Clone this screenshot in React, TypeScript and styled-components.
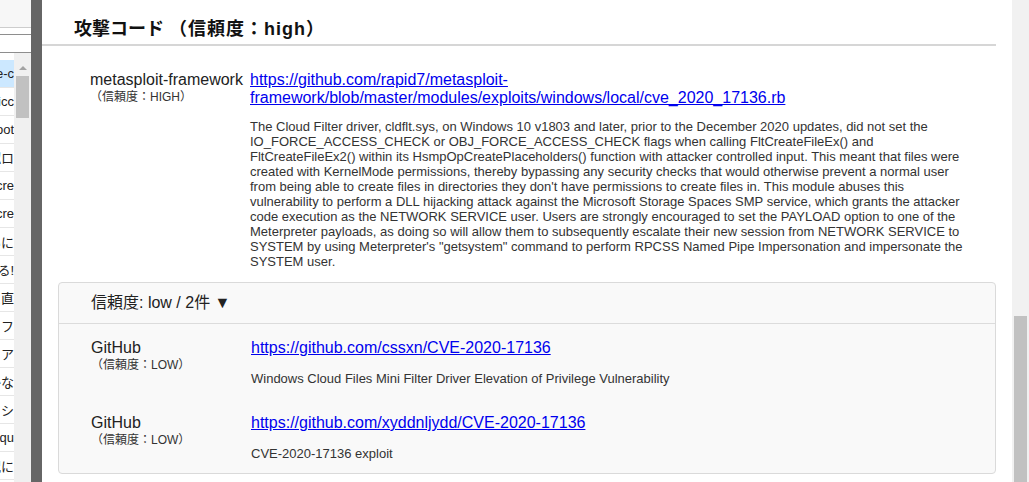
import React from "react";
import styled, { createGlobalStyle } from "styled-components";

const GlobalStyle = createGlobalStyle`
  html, body { margin: 0; padding: 0; background: #fff; overflow: hidden; }
  body {
    font-family: "Liberation Sans", Arial, "Noto Sans CJK JP", sans-serif;
    color: #222;
  }
  * { box-sizing: border-box; }
`;

const Frame = styled.div`
  display: flex;
  width: 1029px;
  height: 482px;
  overflow: hidden;
`;

/* ---------- background page strip (left) ---------- */
const BackPage = styled.div`
  width: 31px;
  flex: none;
  display: flex;
  flex-direction: column;
  background: #fff;
`;

const BackTitle = styled.div`
  height: 28px;
  flex: none;
  background: #f7f7f7;
  border-bottom: 1px solid #cdcdcd;
`;

const BackField = styled.div<{ $h: number }>`
  height: ${(p) => p.$h}px;
  flex: none;
  border-bottom: 1px solid #8e8e8e;
`;

const BackList = styled.div`
  flex: 1;
  min-height: 0;
  display: flex;
`;

const ListCol = styled.div`
  width: 14px;
  flex: none;
  overflow: hidden;
  padding-top: 7px;
`;

const ListRow = styled.div<{ $active?: boolean }>`
  height: 28px;
  display: flex;
  align-items: center;
  justify-content: flex-end;
  overflow: hidden;
  white-space: nowrap;
  border-bottom: 1px solid #e6e6e6;
  background: ${(p) => (p.$active ? "#cce8ff" : "#fff")};
  font-size: 13px;
  color: #222;
  span { flex: none; }
`;

const BackScroll = styled.div`
  width: 17px;
  flex: none;
  background: #f0f0f0;
  display: flex;
  flex-direction: column;
  align-items: center;
  padding-top: 7px;
`;

const ArrowUp = styled.div`
  height: 16px;
  width: 100%;
  display: flex;
  align-items: center;
  justify-content: center;
  &::before {
    content: "";
    border-left: 4px solid transparent;
    border-right: 4px solid transparent;
    border-bottom: 4px solid #a3a3a3;
  }
`;

const SmallThumb = styled.div`
  width: 13px;
  height: 42px;
  background: #c1c1c1;
`;

const Shade = styled.div`
  width: 11px;
  flex: none;
  background: #666;
`;

/* ---------- modal ---------- */
const Modal = styled.div`
  flex: 1;
  min-width: 0;
  background: #fff;
  padding-right: 16px;
  display: flex;
  flex-direction: column;
  overflow: hidden;
`;

const Heading = styled.h2`
  margin: 0;
  padding: 17px 0 3px 32px;
  font-size: 18px;
  line-height: 24px;
  font-weight: bold;
  color: #111;
  border-bottom: 2px solid #d6d6d6;
  white-space: nowrap;
`;

const HeadingNote = styled.span`
  margin-left: 5px;
  letter-spacing: 1px;
`;

const SourceRow = styled.div<{ $indent: number; $top: number }>`
  display: grid;
  grid-template-columns: 160px 1fr;
  padding-left: ${(p) => p.$indent}px;
  margin-top: ${(p) => p.$top}px;
`;

const Label = styled.div`
  font-size: 16px;
  line-height: 18px;
  color: #222;
  white-space: nowrap;
`;

const SubLabel = styled.div`
  font-size: 12px;
  line-height: 17px;
  color: #333;
  white-space: nowrap;
`;

const Link = styled.a`
  font-size: 16px;
  line-height: 18px;
  color: #0000ee;
  text-decoration: underline;
  white-space: nowrap;
`;

const LinkLine = styled.div`
  font-size: 16px;
  line-height: 18px;
`;

const Desc = styled.p<{ $gap: number }>`
  margin: ${(p) => p.$gap}px 0 0;
  font-size: 13px;
  line-height: 15px;
  color: #333;
  white-space: nowrap;
`;

const Panel = styled.div`
  margin: 13px 0 0 16px;
  border: 1px solid #dadada;
  border-radius: 4px;
  background: #f9f9f9;
`;

const PanelHeader = styled.div`
  height: 41px;
  padding-left: 32px;
  display: flex;
  align-items: center;
  border-bottom: 1px solid #dcdcdc;
  font-size: 16px;
  line-height: 18px;
  color: #222;
  white-space: nowrap;
`;

const PanelBody = styled.div`
  padding: 15px 0 12px 0;
`;

/* ---------- right scrollbar ---------- */
const RightScroll = styled.div`
  width: 17px;
  flex: none;
  background: #f1f1f1;
  display: flex;
  flex-direction: column;
  padding: 316px 2px 0;
`;

const RightThumb = styled.div`
  flex: 1;
  background: #c1c1c1;
`;

const backRows = [
  "Use-c",
  "Micc",
  "Boot",
  "確認ロ",
  "Secre",
  "Secre",
  "ついに",
  "できる!",
  "すぐに直",
  "ソフ",
  "URL ア",
  "簡単かな",
  "ハッシ",
  "Requ",
  "状況に",
];

const descLines = [
  "The Cloud Filter driver, cldflt.sys, on Windows 10 v1803 and later, prior to the December 2020 updates, did not set the",
  "IO_FORCE_ACCESS_CHECK or OBJ_FORCE_ACCESS_CHECK flags when calling FltCreateFileEx() and",
  "FltCreateFileEx2() within its HsmpOpCreatePlaceholders() function with attacker controlled input. This meant that files were",
  "created with KernelMode permissions, thereby bypassing any security checks that would otherwise prevent a normal user",
  "from being able to create files in directories they don't have permissions to create files in. This module abuses this",
  "vulnerability to perform a DLL hijacking attack against the Microsoft Storage Spaces SMP service, which grants the attacker",
  "code execution as the NETWORK SERVICE user. Users are strongly encouraged to set the PAYLOAD option to one of the",
  "Meterpreter payloads, as doing so will allow them to subsequently escalate their new session from NETWORK SERVICE to",
  "SYSTEM by using Meterpreter's \"getsystem\" command to perform RPCSS Named Pipe Impersonation and impersonate the",
  "SYSTEM user.",
];

const lowItems = [
  {
    url: "https://github.com/cssxn/CVE-2020-17136",
    desc: "Windows Cloud Files Mini Filter Driver Elevation of Privilege Vulnerability",
  },
  {
    url: "https://github.com/xyddnljydd/CVE-2020-17136",
    desc: "CVE-2020-17136 exploit",
  },
];

export default function App() {
  return (
    <>
      <GlobalStyle />
      <Frame>
        <BackPage>
          <BackTitle />
          <BackField $h={7} />
          <BackField $h={18} />
          <BackList>
            <ListCol>
              {backRows.map((t, i) => (
                <ListRow key={i} $active={i === 0}>
                  <span>{t}</span>
                </ListRow>
              ))}
            </ListCol>
            <BackScroll>
              <ArrowUp />
              <SmallThumb />
            </BackScroll>
          </BackList>
        </BackPage>
        <Shade />
        <Modal>
          <Heading>
            攻撃コード<HeadingNote>（信頼度：high）</HeadingNote>
          </Heading>
          <SourceRow $indent={48} $top={25}>
            <div>
              <Label>metasploit-framework</Label>
              <SubLabel>（信頼度：HIGH）</SubLabel>
            </div>
            <div>
              <LinkLine>
                <Link href="#">
                  https://github.com/rapid7/metasploit-
                  <br />
                  framework/blob/master/modules/exploits/windows/local/cve_2020_17136.rb
                </Link>
              </LinkLine>
              <Desc $gap={12}>
                {descLines.map((l, i) => (
                  <React.Fragment key={i}>
                    {l}
                    {i < descLines.length - 1 && <br />}
                  </React.Fragment>
                ))}
              </Desc>
            </div>
          </SourceRow>
          <Panel>
            <PanelHeader>信頼度: low / 2件 ▼</PanelHeader>
            <PanelBody>
              {lowItems.map((it, i) => (
                <SourceRow key={i} $indent={32} $top={i === 0 ? 0 : 28}>
                  <div>
                    <Label>GitHub</Label>
                    <SubLabel>（信頼度：LOW）</SubLabel>
                  </div>
                  <div>
                    <LinkLine>
                      <Link href="#">{it.url}</Link>
                    </LinkLine>
                    <Desc $gap={14}>{it.desc}</Desc>
                  </div>
                </SourceRow>
              ))}
            </PanelBody>
          </Panel>
        </Modal>
        <RightScroll>
          <RightThumb />
        </RightScroll>
      </Frame>
    </>
  );
}
